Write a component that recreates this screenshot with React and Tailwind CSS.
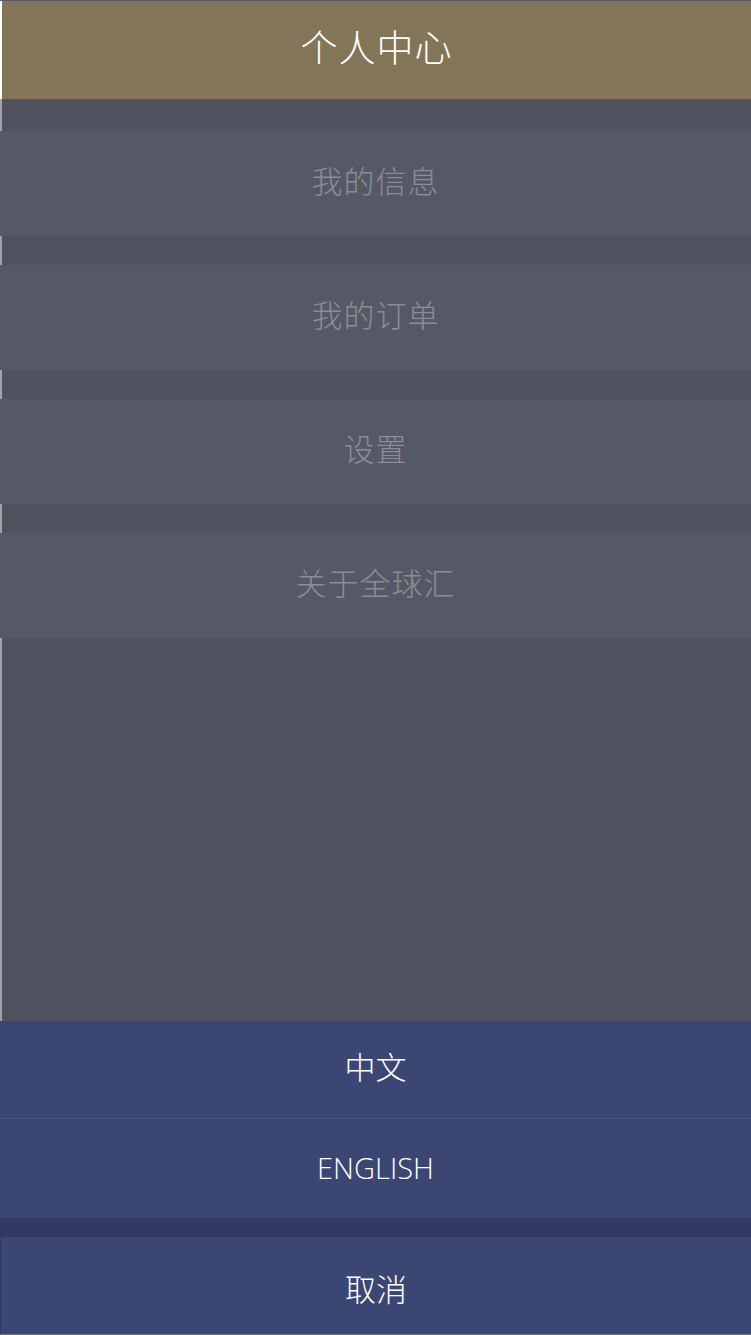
import React from "react";

const menu = ["我的信息", "我的订单", "设置", "关于全球汇"];

const font = { fontFamily: '"Noto Sans CJK SC", "Noto Sans", sans-serif' };

const App = () => {
  return (
    <div
      className="w-[751px] h-[1335px] flex flex-col bg-white border-t border-[#5b5d6b] overflow-hidden"
      style={font}
    >
      {/* Header */}
      <div className="h-[98px] ml-[2px] bg-[#837658] flex items-center justify-center pb-[6px]">
        <span className="text-[37px] font-extralight text-white tracking-[1px]">个人中心</span>
      </div>

      {/* Menu list */}
      <div className="h-[922px] bg-[#50525f] border-l-2 border-[#a3a3a3] pt-[32px] flex flex-col gap-[29px]">
        {menu.map((item) => (
          <div
            key={item}
            className="-ml-[2px] h-[105px] bg-[#555866] flex items-center justify-center pb-[6px]"
          >
            <span className="text-[31px] font-extralight text-[#8b8c94] tracking-[1px]">{item}</span>
          </div>
        ))}
      </div>

      {/* Language sheet */}
      <div className="bg-[#3b4672] flex flex-col">
        <div className="h-[97px] flex items-center justify-center pb-[6px]">
          <span className="text-[31px] font-extralight text-white">中文</span>
        </div>
        <div className="ml-[2px] h-px bg-[#4b5683]" />
        <div className="h-[99px] flex items-center justify-center pb-[2px]">
          <span
            className="text-[29px] font-light text-white"
            style={{ fontFamily: '"Open Sans", "Noto Sans", sans-serif' }}
          >
            ENGLISH
          </span>
        </div>
      </div>
      <div className="h-[19px] bg-[#323a64]" />
      <div className="h-[97px] bg-[#3b4672] border-l border-[#2f375e] flex items-center justify-center pt-[6px]">
        <span className="text-[31px] font-extralight text-white">取消</span>
      </div>
      <div className="h-px bg-[#6d7080]" />
    </div>
  );
};

export default App;
